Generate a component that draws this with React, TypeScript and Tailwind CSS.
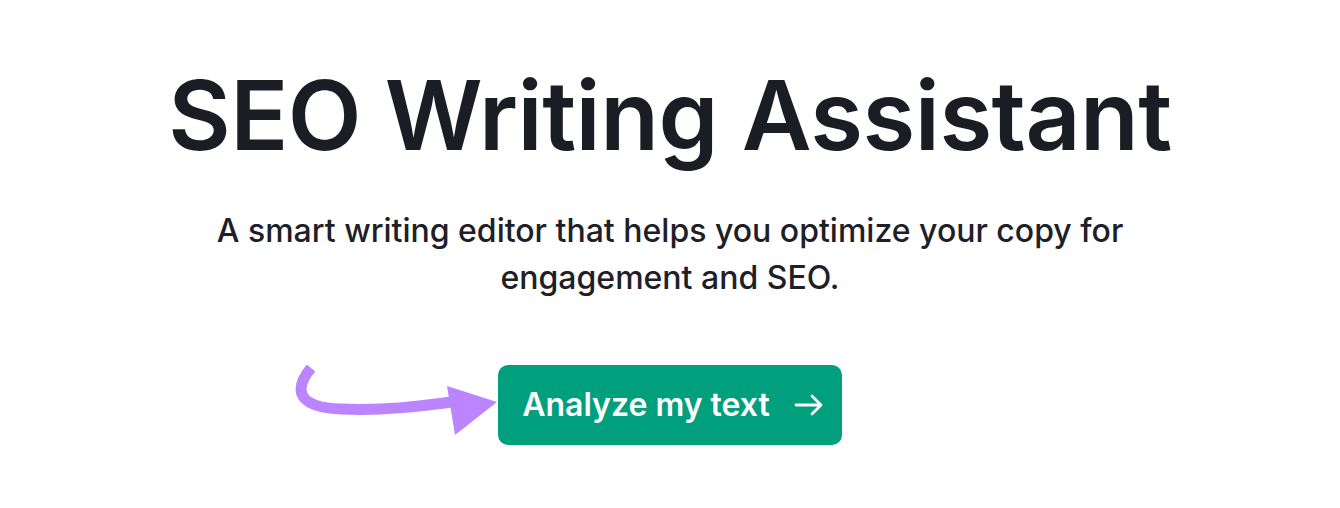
function PurpleArrow() {
  return (
    <svg width="205" height="80" viewBox="0 0 205 80" className="shrink-0" aria-hidden>
      <path
        d="M18 3 C 4 20, -2 42, 48 44 C 90 46, 130 41, 166 36"
        fill="none"
        stroke="#bd84ff"
        strokeWidth="11"
      />
      <path d="M154 21 L204 37 L162 70 Z" fill="#bd84ff" />
    </svg>
  );
}

function ArrowGlyph() {
  return (
    <svg width="30" height="24" viewBox="0 0 30 24" aria-hidden>
      <path
        d="M2 12 H27 M18 3 L27 12 L18 21"
        fill="none"
        stroke="currentColor"
        strokeWidth="2.8"
        strokeLinecap="round"
        strokeLinejoin="round"
      />
    </svg>
  );
}

export default function App() {
  return (
    <div className="min-h-[508px] bg-white font-['Inter','Noto_Sans',sans-serif] text-[#1b1d24]">
      <div className="flex flex-col items-center pt-[67px]">
        <h1 className="text-[96px] leading-none font-semibold tracking-[-0.5px]">SEO Writing Assistant</h1>
        <p className="mt-[44px] max-w-[960px] text-center text-[32px] leading-[47px] font-medium text-[#1e2028]">
          A smart writing editor that helps you optimize your copy for engagement and SEO.
        </p>
        <div className="mt-[64px] flex items-center pr-[205px]">
          <PurpleArrow />
          <button
            type="button"
            className="flex h-[80px] w-[344px] items-center justify-center gap-[24px] rounded-[10px] bg-[#009f7d] pl-[6px] text-[32px] font-semibold text-white"
          >
            Analyze my text
            <ArrowGlyph />
          </button>
        </div>
      </div>
    </div>
  );
}
